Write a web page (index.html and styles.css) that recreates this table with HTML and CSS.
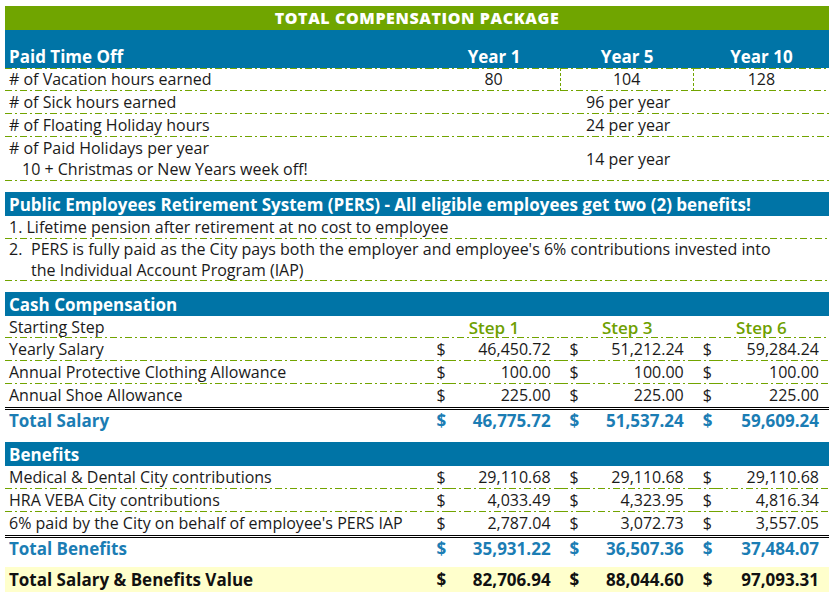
FILE: index.html
```html
<!DOCTYPE html>
<html lang="en">
<head>
<meta charset="utf-8">
<title>Total Compensation Package</title>
<link rel="stylesheet" href="styles.css">
</head>
<body>
<table class="comp">
  <colgroup>
    <col class="c-label">
    <col class="c-d"><col class="c-n">
    <col class="c-d"><col class="c-n">
    <col class="c-d"><col class="c-n-last">
  </colgroup>
  <tr class="title"><td colspan="7">TOTAL COMPENSATION PACKAGE</td></tr>
  <tr class="head">
    <td class="lbl">Paid Time Off</td>
    <td colspan="2" class="year">Year 1</td>
    <td colspan="2" class="year">Year 5</td>
    <td colspan="2" class="year">Year 10</td>
  </tr>
  <tr class="row dash dash-top">
    <td class="lbl"># of Vacation hours earned</td>
    <td colspan="2" class="ctr vsep">80</td>
    <td colspan="2" class="ctr vsep">104</td>
    <td colspan="2" class="ctr">128</td>
  </tr>
  <tr class="row dash"><td class="lbl"># of Sick hours earned</td><td colspan="6" class="ctr">96 per year</td></tr>
  <tr class="row dash"><td class="lbl"># of Floating Holiday hours</td><td colspan="6" class="ctr">24 per year</td></tr>
  <tr class="row dash tall">
    <td class="lbl"># of Paid Holidays per year<br><span class="indent">10 + Christmas or New Years week off!</span></td>
    <td colspan="6" class="ctr">14 per year</td>
  </tr>
  <tr class="gap"><td colspan="7"></td></tr>
  <tr class="bar"><td colspan="7">Public Employees Retirement System (PERS) - All eligible employees get two (2) benefits!</td></tr>
  <tr class="row dash"><td colspan="7" class="lbl">1. Lifetime pension after retirement at no cost to employee</td></tr>
  <tr class="row dash pers2">
    <td colspan="7" class="lbl"><div class="item"><span class="num">2.</span><span>PERS is fully paid as the City pays both the employer and employee's 6% contributions invested into<br>the Individual Account Program (IAP)</span></div></td>
  </tr>
  <tr class="gap"><td colspan="7"></td></tr>
  <tr class="bar"><td colspan="7">Cash Compensation</td></tr>
  <tr class="row dash steps">
    <td class="lbl">Starting Step</td>
    <td colspan="2" class="step">Step 1</td>
    <td colspan="2" class="step">Step 3</td>
    <td colspan="2" class="step">Step 6</td>
  </tr>
  <tr class="row dash">
    <td class="lbl">Yearly Salary</td>
    <td class="d">$</td><td class="n">46,450.72</td>
    <td class="d">$</td><td class="n">51,212.24</td>
    <td class="d">$</td><td class="n">59,284.24</td>
  </tr>
  <tr class="row dash">
    <td class="lbl">Annual Protective Clothing Allowance</td>
    <td class="d">$</td><td class="n">100.00</td>
    <td class="d">$</td><td class="n">100.00</td>
    <td class="d">$</td><td class="n">100.00</td>
  </tr>
  <tr class="row dbl">
    <td class="lbl">Annual Shoe Allowance</td>
    <td class="d">$</td><td class="n">225.00</td>
    <td class="d">$</td><td class="n">225.00</td>
    <td class="d">$</td><td class="n">225.00</td>
  </tr>
  <tr class="row total">
    <td class="lbl">Total Salary</td>
    <td class="d">$</td><td class="n">46,775.72</td>
    <td class="d">$</td><td class="n">51,537.24</td>
    <td class="d">$</td><td class="n">59,609.24</td>
  </tr>
  <tr class="gap"><td colspan="7"></td></tr>
  <tr class="bar"><td colspan="7">Benefits</td></tr>
  <tr class="row dash">
    <td class="lbl">Medical &amp; Dental City contributions</td>
    <td class="d">$</td><td class="n">29,110.68</td>
    <td class="d">$</td><td class="n">29,110.68</td>
    <td class="d">$</td><td class="n">29,110.68</td>
  </tr>
  <tr class="row dash">
    <td class="lbl">HRA VEBA City contributions</td>
    <td class="d">$</td><td class="n">4,033.49</td>
    <td class="d">$</td><td class="n">4,323.95</td>
    <td class="d">$</td><td class="n">4,816.34</td>
  </tr>
  <tr class="row dbl">
    <td class="lbl">6% paid by the City on behalf of employee's PERS IAP</td>
    <td class="d">$</td><td class="n">2,787.04</td>
    <td class="d">$</td><td class="n">3,072.73</td>
    <td class="d">$</td><td class="n">3,557.05</td>
  </tr>
  <tr class="row total">
    <td class="lbl">Total Benefits</td>
    <td class="d">$</td><td class="n">35,931.22</td>
    <td class="d">$</td><td class="n">36,507.36</td>
    <td class="d">$</td><td class="n">37,484.07</td>
  </tr>
  <tr class="gap small"><td colspan="7"></td></tr>
  <tr class="row grand">
    <td class="lbl">Total Salary &amp; Benefits Value</td>
    <td class="d">$</td><td class="n">82,706.94</td>
    <td class="d">$</td><td class="n">88,044.60</td>
    <td class="d">$</td><td class="n">97,093.31</td>
  </tr>
</table>
</body>
</html>
```

FILE: styles.css
```css
:root {
  --blue: #0074a6;
  --green: #70a500;
  --dash: #72a400;
  --ink: #1a1a1a;
  --tblue: #1b7db4;
}

html, body {
  margin: 0;
  padding: 0;
  background: #ffffff;
}

body {
  padding: 6px 0 0 5px;
  font-family: "Open Sans", "Liberation Sans", sans-serif;
  font-size: 16px;
  color: var(--ink);
}

.comp {
  border-collapse: separate;
  border-spacing: 0;
  table-layout: fixed;
  width: 824px;
}

.c-label { width: 422px; }
.c-d { width: 22px; }
.c-n { width: 111px; }
.c-n-last { width: 113px; }

.comp td {
  padding: 0;
  white-space: nowrap;
  line-height: 21px;
  vertical-align: middle;
}

.title td {
  height: 24px;
  background: var(--green);
  color: #ffffff;
  text-align: center;
  font-weight: 800;
  font-size: 16px;
  letter-spacing: 0.6px;
}

.head td {
  height: 37px;
  background: var(--blue);
  color: #ffffff;
  font-weight: 700;
  font-size: 17px;
  vertical-align: bottom;
  padding-bottom: 1px;
}

.head .lbl { padding-left: 4px; }

.head .year {
  text-align: center;
}

.row td { height: 23px; }
.row .lbl { padding-left: 4px; }

.dash td {
  background-image: repeating-linear-gradient(90deg,
    var(--dash) 0 7px, transparent 7px 10px,
    var(--dash) 10px 12px, transparent 12px 15px);
  background-size: 100% 1px;
  background-repeat: no-repeat;
  background-position: left bottom;
}

.dash-top td {
  background-image:
    repeating-linear-gradient(90deg,
      var(--dash) 0 7px, transparent 7px 10px,
      var(--dash) 10px 12px, transparent 12px 15px),
    repeating-linear-gradient(90deg,
      var(--dash) 0 7px, transparent 7px 10px,
      var(--dash) 10px 12px, transparent 12px 15px);
  background-size: 100% 1px, 100% 1px;
  background-position: left bottom, left top;
}

.vsep { border-right: 1px dashed var(--dash); }

.ctr { text-align: center; }

.tall td { height: 44px; }
.indent { padding-left: 13px; }

.gap td { height: 11px; }
.gap.small td { height: 8px; }

.bar td {
  height: 24px;
  background: var(--blue);
  color: #ffffff;
  font-weight: 700;
  font-size: 17px;
  padding-left: 4px;
}

.pers2 td { height: 42px; }

.item {
  display: flex;
}

.item .num {
  width: 22px;
  flex: none;
}

.steps .step {
  text-align: center;
  color: #6ea000;
  font-weight: 600;
  font-size: 17px;
}

.steps td { height: 22px; }

.d {
  padding-left: 9px !important;
  text-align: left;
}

.n {
  text-align: right;
  padding-right: 10px !important;
}

.dbl td {
  border-bottom: 3px double #000000;
}

.total td {
  height: 21px;
  color: var(--tblue);
  font-weight: 700;
  font-size: 17px;
}

.grand td {
  height: 25px;
  background: #ffffcc;
  font-weight: 700;
  font-size: 17px;
  color: #111111;
}
```
